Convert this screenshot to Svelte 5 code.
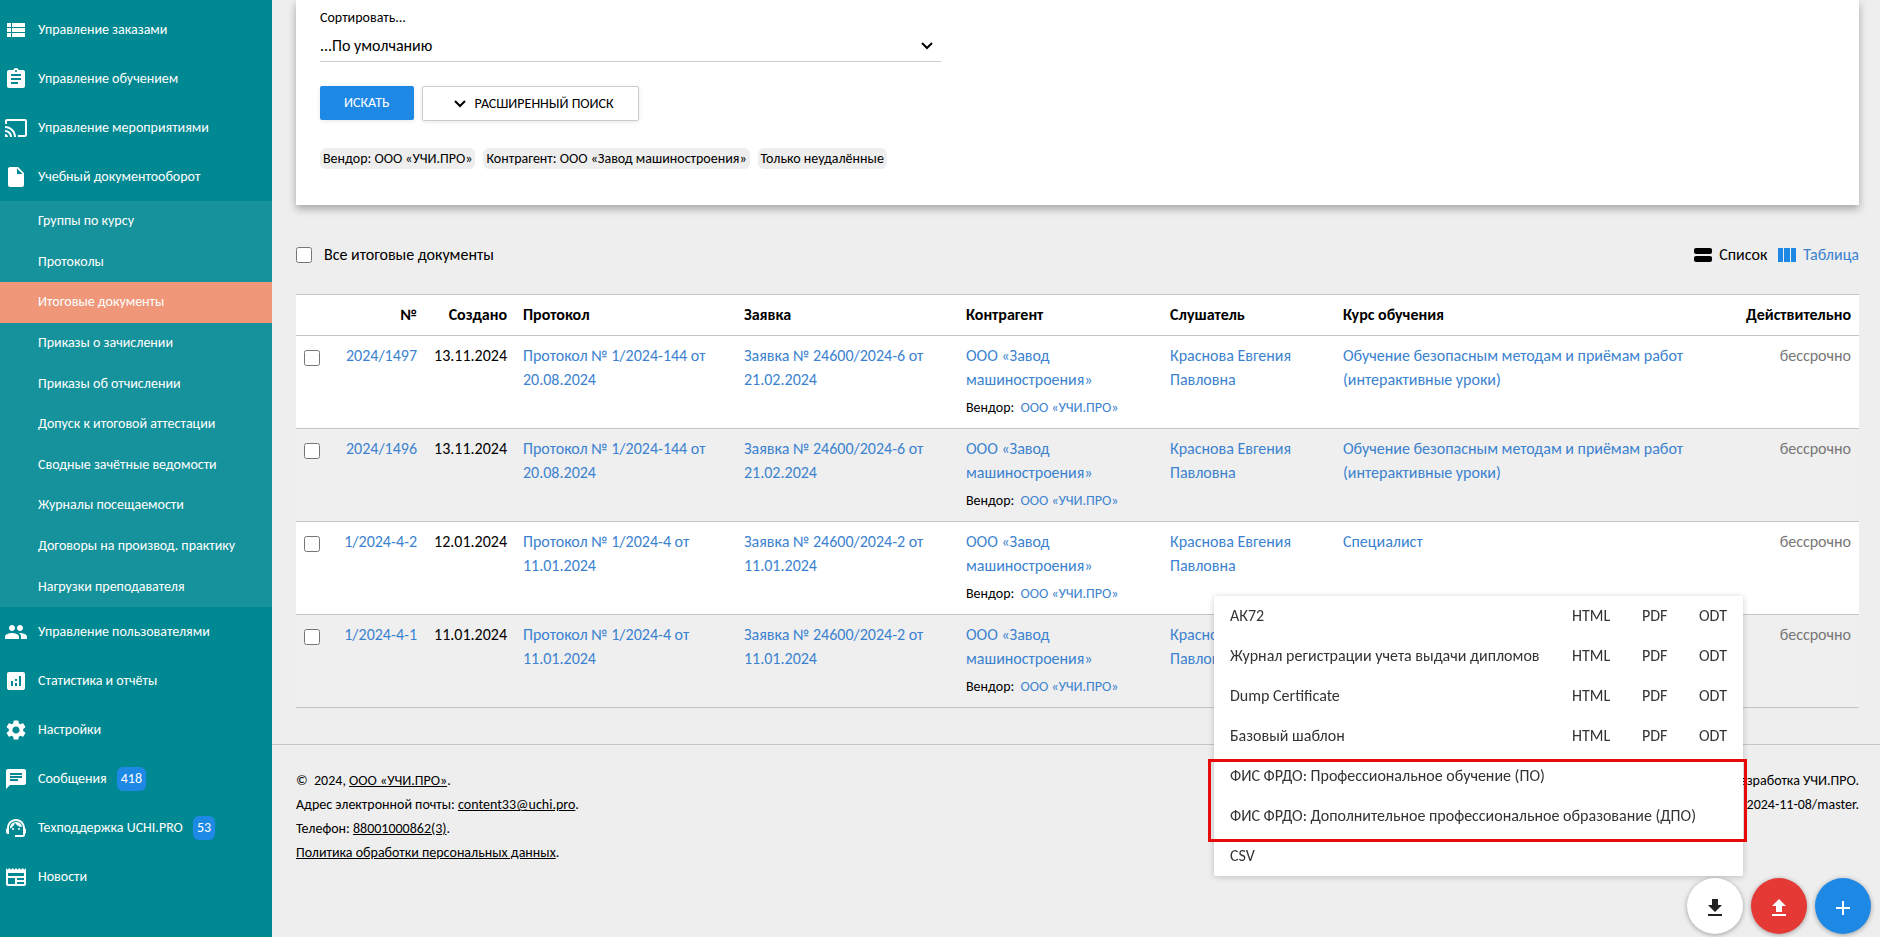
<script lang="ts">
  interface NavItem {
    label: string;
    icon: keyof typeof icons;
    badge?: number;
    children?: string[];
  }

  const icons = {
    list: 'M3 14h4v-4H3v4zm0 5h4v-4H3v4zM3 9h4V5H3v4zm5 5h13v-4H8v4zm0 5h13v-4H8v4zM8 5v4h13V5H8z',
    assignment:
      'M19 3h-4.18C14.4 1.84 13.3 1 12 1c-1.3 0-2.4.84-2.82 2H5c-1.1 0-2 .9-2 2v14c0 1.1.9 2 2 2h14c1.1 0 2-.9 2-2V5c0-1.1-.9-2-2-2zm-7 0c.55 0 1 .45 1 1s-.45 1-1 1-1-.45-1-1 .45-1 1-1zm2 14H7v-2h7v2zm3-4H7v-2h10v2zm0-4H7V7h10v2z',
    cast: 'M21 3H3c-1.1 0-2 .9-2 2v3h2V5h18v14h-7v2h7c1.1 0 2-.9 2-2V5c0-1.1-.9-2-2-2zM1 18v3h3c0-1.66-1.34-3-3-3zm0-4v2c2.76 0 5 2.24 5 5h2c0-3.87-3.13-7-7-7zm0-4v2c4.97 0 9 4.03 9 9h2c0-6.08-4.93-11-11-11z',
    file: 'M6 2c-1.1 0-1.99.9-1.99 2L4 20c0 1.1.89 2 1.99 2H18c1.1 0 2-.9 2-2V8l-6-6H6zm7 7V3.5L18.5 9H13z',
    people:
      'M16 11c1.66 0 2.99-1.34 2.99-3S17.66 5 16 5c-1.66 0-3 1.34-3 3s1.34 3 3 3zm-8 0c1.66 0 2.99-1.34 2.99-3S9.66 5 8 5C6.34 5 5 6.34 5 8s1.34 3 3 3zm0 2c-2.33 0-7 1.17-7 3.5V19h14v-2.5c0-2.33-4.67-3.5-7-3.5zm8 0c-.29 0-.62.02-.97.05 1.16.84 1.97 1.97 1.97 3.45V19h6v-2.5c0-2.33-4.67-3.5-7-3.5z',
    stats:
      'M19 3H5c-1.1 0-2 .9-2 2v14c0 1.1.9 2 2 2h14c1.1 0 2-.9 2-2V5c0-1.1-.9-2-2-2zM9 17H7v-5h2v5zm4 0h-2v-3h2v3zm0-5h-2v-2h2v2zm4 5h-2V7h2v10z',
    settings:
      'M19.14 12.94c.04-.3.06-.61.06-.94 0-.32-.02-.64-.07-.94l2.03-1.58c.18-.14.23-.41.12-.61l-1.92-3.32c-.12-.22-.37-.29-.59-.22l-2.39.96c-.5-.38-1.03-.7-1.62-.94l-.36-2.54c-.04-.24-.24-.41-.48-.41h-3.84c-.24 0-.43.17-.47.41l-.36 2.54c-.59.24-1.13.57-1.62.94l-2.39-.96c-.22-.08-.47 0-.59.22L2.74 8.87c-.12.21-.08.47.12.61l2.03 1.58c-.05.3-.09.63-.09.94s.02.64.07.94l-2.03 1.58c-.18.14-.23.41-.12.61l1.92 3.32c.12.22.37.29.59.22l2.39-.96c.5.38 1.03.7 1.62.94l.36 2.54c.05.24.24.41.48.41h3.84c.24 0 .44-.17.47-.41l.36-2.54c.59-.24 1.13-.56 1.62-.94l2.39.96c.22.08.47 0 .59-.22l1.92-3.32c.12-.22.07-.47-.12-.61l-2.01-1.58zM12 15.6c-1.98 0-3.6-1.62-3.6-3.6s1.62-3.6 3.6-3.6 3.6 1.62 3.6 3.6-1.62 3.6-3.6 3.6z',
    chat: 'M20 2H4c-1.1 0-1.99.9-1.99 2L2 22l4-4h14c1.1 0 2-.9 2-2V4c0-1.1-.9-2-2-2zM6 9h12v2H6V9zm8 5H6v-2h8v2zm4-6H6V6h12v2z',
    support:
      'M21 12.22C21 6.73 16.74 3 12 3c-4.69 0-9 3.65-9 9.28-.6.34-1 .98-1 1.72v2c0 1.1.9 2 2 2h1v-6.1c0-3.87 3.13-7 7-7s7 3.13 7 7V19h-8v2h8c1.1 0 2-.9 2-2v-1.22c.59-.31 1-.92 1-1.64v-2.3c0-.7-.41-1.31-1-1.62zM9 12a1 1 0 1 0 0 2 1 1 0 0 0 0-2zm6 0a1 1 0 1 0 0 2 1 1 0 0 0 0-2zM18 11.03A6.04 6.04 0 0 0 12.05 6c-3.03 0-6.29 2.51-6.03 6.45a8.08 8.08 0 0 0 4.86-5.89c1.31 2.63 4 4.44 7.12 4.47z',
    news: 'M22 3l-1.67 1.67L18.67 3 17 4.67 15.33 3l-1.66 1.67L12 3l-1.67 1.67L8.67 3 7 4.67 5.33 3 3.67 4.67 2 3v16c0 1.1.9 2 2 2h16c1.1 0 2-.9 2-2V3zM11 19H4v-6h7v6zm9 0h-7v-2h7v2zm0-4h-7v-2h7v2zm0-4H4V8h16v3z',
  };

  const nav: NavItem[] = [
    { label: 'Управление заказами', icon: 'list' },
    { label: 'Управление обучением', icon: 'assignment' },
    { label: 'Управление мероприятиями', icon: 'cast' },
    {
      label: 'Учебный документооборот',
      icon: 'file',
      children: [
        'Группы по курсу',
        'Протоколы',
        'Итоговые документы',
        'Приказы о зачислении',
        'Приказы об отчислении',
        'Допуск к итоговой аттестации',
        'Сводные зачётные ведомости',
        'Журналы посещаемости',
        'Договоры на производ. практику',
        'Нагрузки преподавателя',
      ],
    },
    { label: 'Управление пользователями', icon: 'people' },
    { label: 'Статистика и отчёты', icon: 'stats' },
    { label: 'Настройки', icon: 'settings' },
    { label: 'Сообщения', icon: 'chat', badge: 418 },
    { label: 'Техподдержка UCHI.PRO', icon: 'support', badge: 53 },
    { label: 'Новости', icon: 'news' },
  ];

  const activePage = 'Итоговые документы';

  const filters = ['Вендор: ООО «УЧИ.ПРО»', 'Контрагент: ООО «Завод машиностроения»', 'Только неудалённые'];

  const safety = 'Обучение безопасным методам и приёмам работ (интерактивные уроки)';

  const rows = [
    { id: '2024/1497', date: '13.11.2024', protocol: 'Протокол № 1/2024-144 от 20.08.2024', request: 'Заявка № 24600/2024-6 от 21.02.2024', course: safety },
    { id: '2024/1496', date: '13.11.2024', protocol: 'Протокол № 1/2024-144 от 20.08.2024', request: 'Заявка № 24600/2024-6 от 21.02.2024', course: safety },
    { id: '1/2024-4-2', date: '12.01.2024', protocol: 'Протокол № 1/2024-4 от 11.01.2024', request: 'Заявка № 24600/2024-2 от 11.01.2024', course: 'Специалист' },
    { id: '1/2024-4-1', date: '11.01.2024', protocol: 'Протокол № 1/2024-4 от 11.01.2024', request: 'Заявка № 24600/2024-2 от 11.01.2024', course: '' },
  ];

  const formats = ['HTML', 'PDF', 'ODT'];
  const templates = ['АК72', 'Журнал регистрации учета выдачи дипломов', 'Dump Certificate', 'Базовый шаблон'];
  const registry = [
    'ФИС ФРДО: Профессиональное обучение (ПО)',
    'ФИС ФРДО: Дополнительное профессиональное образование (ДПО)',
  ];

  let checked = $state(rows.map(() => false));
  let allChecked = $derived(checked.every(Boolean));

  function toggleAll() {
    const next = !allChecked;
    checked = rows.map(() => next);
  }
</script>

<div class="page">
  <nav class="sidebar">
    <ul>
      {#each nav as item}
        <li>
          <a class="nav-link" href="#top">
            <svg width="24" height="24" viewBox="0 0 24 24" fill="currentColor" aria-hidden="true">
              <path d={icons[item.icon]} />
            </svg>
            <span>{item.label}</span>
            {#if item.badge}<span class="badge">{item.badge}</span>{/if}
          </a>
          {#if item.children}
            <ul class="sub">
              {#each item.children as child}
                <li><a href="#top" class:active={child === activePage}>{child}</a></li>
              {/each}
            </ul>
          {/if}
        </li>
      {/each}
    </ul>
  </nav>

  <div class="content">
    <main>
      <form class="search" onsubmit={(e) => e.preventDefault()}>
        <div class="field">
          <label for="sort">Сортировать...</label>
          <div class="select">
            <select id="sort">
              <option>...По умолчанию</option>
            </select>
            <svg width="12" height="8" viewBox="0 0 12 8" fill="none" stroke="currentColor" stroke-width="2" aria-hidden="true">
              <path d="M1 1l5 5 5-5" />
            </svg>
          </div>
        </div>
        <div class="buttons">
          <button class="primary" type="submit">Искать</button>
          <button class="outline" type="button">
            <svg width="12" height="8" viewBox="0 0 12 8" fill="none" stroke="currentColor" stroke-width="2" aria-hidden="true">
              <path d="M1 1l5 5 5-5" />
            </svg>
            Расширенный поиск
          </button>
        </div>
        <div class="chips">
          {#each filters as filter}
            <span class="chip">{filter}</span>
          {/each}
        </div>
      </form>

      <div class="toolbar">
        <label class="check-all">
          <input type="checkbox" checked={allChecked} onchange={toggleAll} />
          Все итоговые документы
        </label>
        <div class="views">
          <button type="button">
            <svg width="18" height="14" viewBox="0 0 18 14" fill="currentColor" aria-hidden="true">
              <rect width="18" height="6" rx="2" />
              <rect y="8" width="18" height="6" rx="2" />
            </svg>
            Список
          </button>
          <button type="button" class="current">
            <svg width="18" height="14" viewBox="0 0 18 14" fill="#1e88e5" aria-hidden="true">
              <path d="M0 0h5v14H0zM6 0h6v14H6zM13 0h5v14h-5z" />
            </svg>
            Таблица
          </button>
        </div>
      </div>

      <table>
        <thead>
          <tr>
            <th class="c-check"></th>
            <th class="c-id right">№</th>
            <th class="c-date right">Создано</th>
            <th class="c-protocol">Протокол</th>
            <th class="c-request">Заявка</th>
            <th class="c-client">Контрагент</th>
            <th class="c-student">Слушатель</th>
            <th>Курс обучения</th>
            <th class="c-valid right">Действительно</th>
          </tr>
        </thead>
        <tbody>
          {#each rows as row, i}
            <tr>
              <td><input type="checkbox" aria-label={row.id} bind:checked={checked[i]} /></td>
              <td class="right"><a href="#top">{row.id}</a></td>
              <td class="right">{row.date}</td>
              <td><a href="#top">{row.protocol}</a></td>
              <td><a href="#top">{row.request}</a></td>
              <td>
                <a href="#top">ООО «Завод машиностроения»</a>
                <div class="vendor">Вендор: <a href="#top">ООО «УЧИ.ПРО»</a></div>
              </td>
              <td><a href="#top">Краснова Евгения Павловна</a></td>
              <td>{#if row.course}<a href="#top">{row.course}</a>{/if}</td>
              <td class="right muted">бессрочно</td>
            </tr>
          {/each}
        </tbody>
      </table>
    </main>

    <footer>
      <div>
        <p>©&nbsp; 2024, <a href="#top">ООО «УЧИ.ПРО»</a>.</p>
        <p>Адрес электронной почты: <a href="#top">content33@uchi.pro</a>.</p>
        <p>Телефон: <a href="#top">88001000862(3)</a>.</p>
        <p><a href="#top">Политика обработки персональных данных</a>.</p>
      </div>
      <div class="right">
        <p>Разработка УЧИ.ПРО.</p>
        <p>2024-11-08/master.</p>
      </div>
    </footer>
  </div>

  <div class="export">
    {#each templates as name}
      <div class="export-row">
        <span>{name}</span>
        {#each formats as format}
          <a href="#top">{format}</a>
        {/each}
      </div>
    {/each}
    <div class="marked">
      {#each registry as name}
        <a class="export-row" href="#top">{name}</a>
      {/each}
    </div>
    <a class="export-row" href="#top">CSV</a>
  </div>

  <div class="fabs">
    <button class="fab" type="button" aria-label="Скачать">
      <svg width="24" height="24" viewBox="0 0 24 24" fill="currentColor"><path d="M9 3h6v6h4l-7 7-7-7h4zM5 18h14v2H5z" /></svg>
    </button>
    <button class="fab red" type="button" aria-label="Загрузить">
      <svg width="24" height="24" viewBox="0 0 24 24" fill="currentColor"><path d="M9 16h6v-6h4l-7-7-7 7h4zM5 18h14v2H5z" /></svg>
    </button>
    <button class="fab blue" type="button" aria-label="Добавить">
      <svg width="24" height="24" viewBox="0 0 24 24" fill="currentColor"><path d="M19 13h-6v6h-2v-6H5v-2h6V5h2v6h6z" /></svg>
    </button>
  </div>
</div>

<style>
  :global(body) { margin: 0; background: #eee; }
  .page {
    display: flex;
    min-height: 100vh;
    font: 16px/24px Calibri, Carlito, Lato, sans-serif;
    color: #000;
  }
  ul { margin: 0; padding: 0; list-style: none; }
  p { margin: 0; }
  a { color: #3b82d0; text-decoration: none; }
  button, select { font: inherit; color: inherit; cursor: pointer; }
  input[type="checkbox"] { width: 16px; height: 16px; margin: 0; }
  .right { text-align: right; }

  .sidebar {
    flex: 0 0 272px;
    padding-top: 5px;
    box-sizing: border-box;
    background: #008992;
    font-size: 14px;
  }
  .sidebar a { color: #fff; display: flex; align-items: center; }
  .nav-link { height: 49px; padding-left: 4px; gap: 10px; }
  .badge {
    padding: 0 4px;
    background: #1e88e5;
    border-radius: 6px;
  }
  .sub { background: #15929b; height: 406px; display: grid; grid-auto-rows: 1fr; }
  .sub li { display: grid; }
  .sub a { padding-left: 38px; }
  .sub a.active { background: #f0977a; }

  .content { flex: 1; min-width: 0; }
  main { padding: 0 21px 36px 24px; }

  .search {
    padding: 6px 24px 36px;
    background: #fff;
    box-shadow: 0 4px 8px rgba(0, 0, 0, .3);
    font-size: 14px;
  }
  .field { width: 41%; }
  .field label { display: block; }
  .select { display: flex; align-items: center; border-bottom: 1px solid #ccc; font-size: 16px; }
  .select select {
    flex: 1;
    height: 31px;
    padding: 0;
    border: none;
    background: none;
    appearance: none;
  }
  .select svg { margin-right: 8px; }
  .buttons { display: flex; gap: 8px; margin-top: 24px; align-items: flex-start; }
  .buttons button {
    display: flex;
    align-items: center;
    height: 34px;
    padding: 0 24px;
    border: none;
    border-radius: 2px;
    text-transform: uppercase;
    box-shadow: 0 1px 4px rgba(0, 0, 0, .1);
  }
  .buttons .primary { background: #1e88e5; color: #fff; }
  .buttons .outline {
    gap: 9px;
    height: 35px;
    padding: 0 24px 0 31px;
    background: #fff;
    border: 1px solid #ccc;
  }
  .chips { display: flex; gap: 8px; margin-top: 27px; }
  .chip { padding: 0 3px; line-height: 21px; background: #eee; border-radius: 6px; }

  .toolbar { display: flex; justify-content: space-between; align-items: center; padding: 38px 0 27px; }
  .check-all { display: flex; align-items: center; gap: 12px; }
  .views { display: flex; gap: 11px; }
  .views button { display: flex; align-items: center; gap: 7px; padding: 0; border: none; background: none; }
  .views .current { color: #3b82d0; }

  table { width: 100%; table-layout: fixed; border-collapse: collapse; }
  tr { border-top: 1px solid #c4c4c4; border-bottom: 1px solid #c4c4c4; background: #fff; }
  tbody tr:nth-child(even) { background: #efefef; }
  th, td { padding: 8px; text-align: left; vertical-align: top; }
  th.right, td.right { text-align: right; }
  td input { display: block; }
  td:first-child { padding-top: 14px; }
  .c-check { width: 24px; }
  .c-id { width: 73px; }
  .c-date { width: 74px; }
  .c-protocol { width: 205px; }
  .c-request { width: 206px; }
  .c-client { width: 188px; }
  .c-student { width: 157px; }
  .c-valid { width: 114px; }
  .vendor { padding-top: 4px; font-size: 14px; }
  .vendor a { margin-left: 3px; }
  .muted { color: #777; }

  footer {
    display: flex;
    justify-content: space-between;
    padding: 24px 21px 24px 24px;
    border-top: 1px solid #c4c4c4;
    font-size: 14px;
  }
  footer a { color: inherit; text-decoration: underline; }

  .export {
    position: fixed;
    right: 137px;
    bottom: 61px;
    background: #fff;
    border-radius: 2px;
    box-shadow: 0 1px 6px rgba(0, 0, 0, .2);
    color: #333;
  }
  .export-row {
    display: grid;
    grid-template-columns: 310px 38px 25px 28px;
    column-gap: 32px;
    padding: 8px 16px;
    color: #333;
    white-space: nowrap;
  }
  .export-row a { color: inherit; }
  .marked { position: relative; }
  .marked::after {
    content: '';
    position: absolute;
    inset: 3px -4px -6px -6px;
    border: 3px solid #e60a0a;
    pointer-events: none;
  }

  .fabs { position: fixed; right: 9px; bottom: 3px; display: flex; gap: 8px; }
  .fab {
    display: flex;
    align-items: center;
    justify-content: center;
    width: 56px;
    height: 56px;
    padding: 4px 0 0;
    border: none;
    border-radius: 50%;
    background: #fff;
    color: #222;
    box-shadow: 0 1px 5px rgba(0, 0, 0, .35);
  }
  .fab.red { background: #e53935; color: #fff; }
  .fab.blue { background: #1e88e5; color: #fff; }
</style>
